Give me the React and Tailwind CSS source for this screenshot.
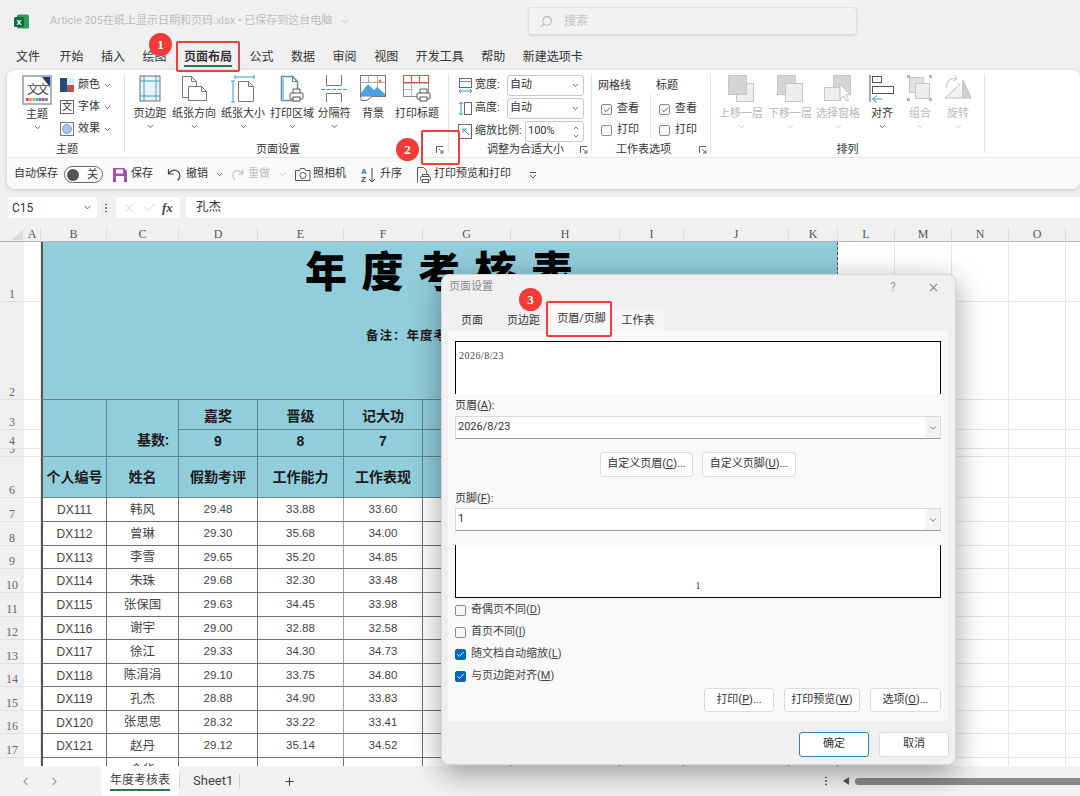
import React from 'react';
import { ChevronDown, ChevronUp, ChevronLeft, ChevronRight, Check, Plus, Search, X, EllipsisVertical } from 'lucide-react';

const cjk = "font-['Roboto','Noto_Sans_CJK_SC',sans-serif]";

const rows = [
  ['DX111', '韩风', '29.48', '33.88', '33.60'],
  ['DX112', '曾琳', '29.30', '35.68', '34.00'],
  ['DX113', '李雪', '29.65', '35.20', '34.85'],
  ['DX114', '朱珠', '29.68', '32.30', '33.48'],
  ['DX115', '张保国', '29.63', '34.45', '33.98'],
  ['DX116', '谢宇', '29.00', '32.88', '32.58'],
  ['DX117', '徐江', '29.33', '34.30', '34.73'],
  ['DX118', '陈涓涓', '29.10', '33.75', '34.80'],
  ['DX119', '孔杰', '28.88', '34.90', '33.83'],
  ['DX120', '张思思', '28.32', '33.22', '33.41'],
  ['DX121', '赵丹', '29.12', '35.14', '34.52'],
];
const letters = 'ABCDEFGHIJKLMNOP'.split('');

/* ---------- ribbon icons ---------- */
const Svg = ({ w = 30, h = 28, children }) => (
  <svg width={w} height={h} viewBox={`0 0 ${w} ${h}`} fill="none">{children}</svg>
);

const ThemeIcon = () => (
  <Svg w={30} h={30}>
    <rect x="1" y="1" width="28" height="28" fill="#fff" stroke="#8a9bb0" strokeWidth="1.5" />
    <path d="M20 2h8v10z" fill="#1f3864" />
    <text x="5" y="19" fontSize="12" fill="#444" fontFamily="Noto Sans CJK SC">文</text>
    <text x="15" y="19" fontSize="12" fill="#444" fontFamily="Noto Sans CJK SC">文</text>
    {['#c0504d', '#f79646', '#9bbb59', '#4bacc6', '#8064a2', '#c0504d', '#4f81bd'].map((c, i) => (
      <rect key={i} x={4 + i * 3.2} y="23" width="2.6" height="3" fill={c} />
    ))}
  </Svg>
);
const MarginIcon = () => (
  <Svg w={22} h={27}>
    <rect x="1" y="1" width="20" height="25" fill="#eaf5fb" stroke="#6e6e6e" />
    <path d="M5 1v25M17 1v25M1 6h20M1 21h20" stroke="#3c9ad6" />
  </Svg>
);
const Page = ({ d }) => <path d={d} fill="#fff" stroke="#777" />;
const OrientIcon = () => (
  <Svg w={27} h={27}>
    <Page d="M1.5 1.5h9l5 5v16h-14z" />
    <Page d="M7.5 11.5h13l5 5v9h-18z" />
    <path d="M10.5 1.5v5h5M20.5 11.5v5h5" stroke="#777" />
  </Svg>
);
const SizeIcon = () => (
  <Svg w={24} h={28}>
    <path d="M4 2h19M4 0v4M23 0v4M2 6v21M0 6h4M0 27h4" stroke="#3c9ad6" />
    <Page d="M7.5 6.5h10l5 5v15h-15z" />
    <path d="M17.5 6.5v5h5" stroke="#777" />
  </Svg>
);
const Printer = ({ x, y }) => (
  <g transform={`translate(${x} ${y})`}>
    <path d="M3.5 4.5v-4h7v4" fill="#fff" stroke="#555" />
    <rect x="0.5" y="4.5" width="13" height="6" rx="1" fill="#fff" stroke="#555" />
    <rect x="3.5" y="8.5" width="7" height="4" fill="#fff" stroke="#555" />
  </g>
);
const AreaIcon = () => (
  <Svg w={24} h={28}>
    <path d="M1.5 1.5h11l5 5v19h-16z" fill="#fff" stroke="#5f8fb5" strokeWidth="1.5" />
    <path d="M3 3v21" stroke="#9cc3df" strokeWidth="2" />
    <path d="M12.5 1.5v5h5" stroke="#777" />
    <Printer x={9.5} y={13.5} />
  </Svg>
);
const BreakIcon = () => (
  <Svg w={26} h={27}>
    <path d="M5.5 0v10.5h15V0M5.5 27V18.5h15V27" stroke="#777" />
    <path d="M0 14.5h26" stroke="#3c9ad6" strokeDasharray="4 1.5" />
  </Svg>
);
const PictureIcon = () => (
  <Svg w={26} h={27}>
    <rect x="0.5" y="0.5" width="25" height="21" fill="#fff" stroke="#777" />
    <path d="M.5 7.5h25M8.5.5v7M17.5.5v14" stroke="#aaa" />
    <path d="M1 18l7-9 6 6 3-3 8 7v2H1z" fill="#4aa3df" />
    <circle cx="20" cy="6" r="1.6" fill="#e8883a" />
    <path d="M1 21.5v4h6l5-4" fill="#fff" stroke="#777" />
  </Svg>
);
const TitlesIcon = () => (
  <Svg w={28} h={27}>
    <path d="M.5 8.5h25M.5 14.5h10M8.5.5v21M16.5.5v10" stroke="#b9b9b9" />
    <rect x="0.5" y="0.5" width="25" height="21" stroke="#8a8a8a" />
    <path d="M.5.5h25v7H.5zM8.5.5v7M16.5.5v7" stroke="#d9534f" strokeWidth="1.2" />
    <Printer x={13.5} y={13.5} />
  </Svg>
);
const UpIcon = () => (
  <Svg w={26} h={27}>
    <rect x="8.5" y="8.5" width="17" height="18" fill="#eee" stroke="#c6c6c6" />
    <rect x="0.5" y="0.5" width="18" height="19" fill="#d4d4d4" stroke="#c6c6c6" />
  </Svg>
);
const DownIcon = () => (
  <Svg w={26} h={27}>
    <rect x="0.5" y="0.5" width="18" height="19" fill="#d4d4d4" stroke="#c6c6c6" />
    <rect x="8.5" y="8.5" width="17" height="18" fill="#eee" stroke="#c6c6c6" />
  </Svg>
);
const PaneIcon = () => (
  <Svg w={28} h={27}>
    <rect x="9.5" y="0.5" width="17" height="19" fill="#d4d4d4" stroke="#c6c6c6" />
    <rect x="0.5" y="12.5" width="16" height="13" fill="#eee" stroke="#c6c6c6" />
    <path d="M16 9l10 10-4 1 2.500 5-2.500 1-2.500-5-3.500 3z" fill="#fff" stroke="#bcbcbc" />
  </Svg>
);
const AlignIcon = () => (
  <Svg w={26} h={28}>
    <path d="M1 0v27" stroke="#555" />
    <rect x="3.500" y="1.500" width="9" height="6" fill="#fff" stroke="#555" />
    <rect x="3.500" y="11.500" width="21" height="7" fill="#fff" stroke="#555" />
    <path d="M13 24H4M8 20.500L3.500 24 8 27.500" stroke="#3c9ad6" />
  </Svg>
);
const GroupIcon = () => (
  <Svg w={26} h={27}>
    <rect x="2.500" y="2.500" width="14" height="15" fill="#e2e2e2" stroke="#c6c6c6" />
    <rect x="8.500" y="8.500" width="14" height="15" fill="#eee" stroke="#c6c6c6" />
    {[[0, 0], [22, 0], [0, 23], [22, 23]].map(([x, y]) => <rect key={x + '-' + y} x={x} y={y} width="3" height="3" fill="#b5b5b5" />)}
  </Svg>
);
const RotateIcon = () => (
  <Svg w={28} h={27}>
    <path d="M19 5l8 18h-9z" fill="#cfcfcf" stroke="#c0c0c0" />
    <path d="M16 9L1 23h17" fill="#f2f2f2" stroke="#c0c0c0" />
    <path d="M3 13a7 7 0 0 1 9-9M11 0l2 4-4 2" stroke="#c0c0c0" />
  </Svg>
);
const Launcher = ({ className = '' }) => (
  <svg width="8" height="8" viewBox="0 0 8 8" fill="none" className={className}>
    <path d="M.5 7V.5H7M3 3l4 4M7 4v3H4" stroke="#666" />
  </svg>
);

/* ---------- small parts ---------- */
const Chev = ({ dim }) => <ChevronDown size={9} strokeWidth={2.2} className={dim ? 'text-[#c4c4c4]' : 'text-[#444]'} />;

function RibbonBtn({ width, label, icon, dim }) {
  return (
    <div className={`flex flex-col items-center ${width}`}>
      <div className="flex h-[29px] items-center justify-center">{icon}</div>
      <span className={`mt-[3px] h-[16px] whitespace-nowrap text-[11px] leading-[16px] ${dim ? 'text-[#b9b9b9]' : 'text-[#333]'}`}>{label}</span>
      <div className="flex h-[8px] items-center"><Chev dim={dim} /></div>
    </div>
  );
}

const Divider = () => <div className="mt-[4px] h-[79px] w-px shrink-0 bg-[#e4e4e4]" />;

function MiniRow({ icon, label }) {
  return (
    <div className="flex h-[22px] items-center">
      <div className="flex w-[18px] items-center">{icon}</div>
      <span className="text-[11px] text-[#333]">{label}</span>
      <span className="ml-[3px]"><Chev /></span>
    </div>
  );
}

function SizeRow({ icon, label, box, value, spin }) {
  return (
    <div className="flex h-[23px] items-center">
      <div className="flex w-[17px] items-center">{icon}</div>
      <span className="text-[11px] whitespace-nowrap text-[#333]">{label}</span>
      <div className={`ml-auto flex h-[21px] items-center justify-between rounded-[3px] border border-[#c8c8c8] bg-white pl-[2px] pr-[3px] text-[11px] text-[#333] ${box}`}>
        <span>{value}</span>
        {spin ? (
          <span className="flex flex-col"><ChevronUp size={8} /><ChevronDown size={8} /></span>
        ) : <Chev />}
      </div>
    </div>
  );
}

const RibbonCheck = ({ on, label }) => (
  <div className="flex h-[21px] items-center gap-[5px]">
    <span className="flex h-[11px] w-[11px] items-center justify-center rounded-[2px] border border-[#8a8a8a] bg-white">
      {on && <Check size={8} strokeWidth={2.5} className="text-[#333]" />}
    </span>
    <span className="text-[11px] text-[#333]">{label}</span>
  </div>
);

const DialogCheck = ({ on, children }) => (
  <div className="flex h-[22px] items-center gap-[5px]">
    <span className={`flex h-[11px] w-[11px] items-center justify-center rounded-[2px] border ${on ? 'border-[#0067c0] bg-[#0067c0]' : 'border-[#8a8a8a] bg-[#f6f6f6]'}`}>
      {on && <Check size={9} strokeWidth={2.5} className="text-white" />}
    </span>
    <span className="text-[11px] text-[#444]">{children}</span>
  </div>
);

const DlgBtn = ({ width, children, primary }) => (
  <div className={`flex items-center justify-center rounded-[3px] border bg-white text-[11px] text-[#333] ${width} ${primary ? 'border-[#2f7fc1]' : 'border-[#dcdcdc]'}`}>
    {children}
  </div>
);

const Combo = ({ value }) => (
  <div className="flex h-[23px] items-center border border-[#dadada] border-b-[#9a9a9a] bg-white pl-[2px] text-[11px] text-[#333]">
    <span className="flex-1">{value}</span>
    <span className="flex h-full w-[15px] items-center justify-center bg-[#f3f3f3]"><ChevronDown size={10} className="text-[#666]" /></span>
  </div>
);

const U = ({ children }) => <span className="underline">{children}</span>;

/* ---------- sheet cells ---------- */
const Blank = () => <div className="border-b border-r border-[#e7e7e7] bg-white" />;
const Blanks = () => <>{[0, 1, 2, 3, 4].map((i) => <Blank key={i} />)}</>;
const RowNum = ({ n }) => (
  <div className="flex items-end justify-center overflow-hidden border-b border-[#e0e0e0] bg-[#f0f0f0] font-['Liberation_Serif',serif] text-[12px] leading-[13px] text-[#666]">{n}</div>
);
const ColA = () => <div className="border-b border-r border-[#e7e7e7] bg-white" />;
const Blue = ({ className = '', children }) => (
  <div className={`flex items-center justify-center border-b border-r border-[#5f8494] bg-[#92cddc] pt-[1px] text-[14px] font-bold text-[#1b1b1b] ${className}`}>{children}</div>
);
const Data = ({ className = '', children }) => (
  <div className={`flex items-center justify-center overflow-hidden border-b border-r border-[#707070] bg-white pt-[1px] text-[#444] ${className}`}>{children}</div>
);
const num = "font-['Liberation_Sans',sans-serif] text-[11.5px]";

function Sheet() {
  return (
    <div className="min-h-0 flex-1 overflow-hidden bg-white">
      <div className="grid grid-cols-[24px_17px_66px_72px_79px_86px_79px_88px_109px_64px_105px_49px_57px_57px_57px_57px_57px] grid-rows-[15px_60px_98px_30px_19px_8px_41px_24px_24px_23px_24px_24px_23px_24px_23px_24px_23px_24px_24px]">
        <div className="flex items-center justify-end border-b border-[#b5b5b5] bg-[#f0f0f0] pr-[1px]">
          <svg width="11" height="11" viewBox="0 0 11 11"><path d="M11 0v11H0z" fill="#dcdcdc" /></svg>
        </div>
        {letters.map((l) => (
          <div key={l} className="flex items-center justify-center overflow-hidden border-b border-r border-b-[#b5b5b5] border-r-[#dedede] bg-[#f0f0f0] font-['Liberation_Serif',serif] text-[12px] text-[#555]">{l}</div>
        ))}

        <RowNum n={1} /><ColA />
        <div className="col-span-10 row-span-2 flex flex-col border-b border-l-2 border-r border-b-[#5f8494] border-l-[#555] border-r-[#555] bg-[#92cddc] [border-right-style:dashed]">
          <div className="flex h-[59px] items-start justify-center">
            <span className="whitespace-pre text-[42px] font-black leading-[62px] tracking-[2px] text-black">年 度 考 核 表</span>
          </div>
          <div className="mt-[26px] pl-[323px] text-[12.5px] font-bold tracking-[1px] text-[#1b1b1b]">备注：年度考</div>
        </div>
        <Blanks />
        <RowNum n={2} /><ColA /><Blanks />

        <RowNum n={3} /><ColA />
        <Blue className="row-span-3 border-l-2 border-l-[#555]" />
        <Blue className="row-span-3 items-end justify-end pb-[5px] pr-[9px]">基数:</Blue>
        <Blue className="pt-[3px]">嘉奖</Blue><Blue className="pt-[3px]">晋级</Blue><Blue className="pt-[3px]">记大功</Blue><Blue /><Blue /><Blue /><Blue /><Blue />
        <Blanks />
        <RowNum n={4} /><ColA />
        <Blue className={`row-span-2 pb-[4px] ${num} !text-[14px]`}>9</Blue>
        <Blue className={`row-span-2 pb-[4px] ${num} !text-[14px]`}>8</Blue>
        <Blue className={`row-span-2 pb-[4px] ${num} !text-[14px]`}>7</Blue>
        <Blue className="row-span-2" /><Blue className="row-span-2" /><Blue className="row-span-2" /><Blue className="row-span-2" /><Blue className="row-span-2" />
        <Blanks />
        <RowNum n={5} /><ColA /><Blanks />

        <RowNum n={6} /><ColA />
        <Blue className="whitespace-nowrap border-l-2 border-l-[#555]">个人编号</Blue>
        <Blue>姓名</Blue><Blue>假勤考评</Blue><Blue>工作能力</Blue><Blue>工作表现</Blue><Blue /><Blue /><Blue /><Blue /><Blue />
        <Blanks />

        {rows.map((r, i) => (
          <React.Fragment key={r[0]}>
            <RowNum n={i + 7} /><ColA />
            <Data className={`border-l-2 border-l-[#555] ${num} text-[12px]`}>{r[0]}</Data>
            <Data className="text-[12.5px]">{r[1]}</Data>
            <Data className={`${num}`}>{r[2]}</Data>
            <Data className={`${num} border-r-[#a5a5a5]`}>{r[3]}</Data>
            <Data className={`${num}`}>{r[4]}</Data>
            <Data /><Data /><Data /><Data /><Data />
            <Blanks />
          </React.Fragment>
        ))}
        <RowNum n={18} /><ColA />
        <Data className={`border-l-2 border-l-[#555] ${num}`} />
        <Data className="text-[12.5px]">金华</Data>
        <Data /><Data /><Data /><Data /><Data /><Data /><Data /><Data />
        <Blanks />
      </div>
    </div>
  );
}

/* ---------- dialog ---------- */
function PageSetupDialog() {
  return (
    <div className="absolute left-[441px] top-[274px] flex h-[491px] w-[515px] flex-col rounded-[8px] border border-[#d5d5d5] bg-[#f0f0f0] shadow-[0_8px_30px_rgba(0,0,0,0.38)]">
      <div className="flex h-[34px] shrink-0 items-center pb-[10px] pl-[7px] pr-[15px] text-[11px] text-[#8a8a8a]">
        <span className="flex-1">页面设置</span>
        <span className="mr-[31px] text-[12px] text-[#9a9a9a]">?</span>
        <X size={13} className="text-[#8a8a8a]" />
      </div>
      <div className="flex h-[22px] shrink-0 items-end pl-[6px] text-[11px] text-[#333]">
        <div className="flex h-full w-[48px] items-center justify-center pt-[3px]">页面</div>
        <div className="flex h-full w-[55px] items-center justify-center pt-[3px]">页边距</div>
        <div className="flex h-[26px] w-[61px] items-center justify-center bg-[#f9f9f9] pt-[3px]">页眉/页脚</div>
        <div className="flex h-full w-[52px] items-center justify-center rounded-t-[3px] bg-[#f6f6f6] pt-[3px]">工作表</div>
      </div>
      <div className="ml-[6px] flex h-[390px] w-[500px] shrink-0 flex-col bg-[#f9f9f9] px-[7px] pt-[10px]">
        <div className="h-[53px] border-x border-t border-black bg-white pl-[3px] pt-[8px] font-['Liberation_Serif',serif] text-[10px] leading-[11px] tracking-[0.5px] text-[#444]">2026/8/23</div>
        <div className="flex h-[22px] items-center pt-[3px] text-[11px] text-[#333]">页眉(<U>A</U>):</div>
        <Combo value="2026/8/23" />
        <div className="mt-[13px] flex h-[25px] justify-center gap-[9px]">
          <DlgBtn width="w-[93px]">自定义页眉(<U>C</U>)...</DlgBtn>
          <DlgBtn width="w-[94px]">自定义页脚(<U>U</U>)...</DlgBtn>
        </div>
        <div className="mt-[10px] flex h-[21px] items-center pt-[3px] text-[11px] text-[#333]">页脚(<U>F</U>):</div>
        <Combo value="1" />
        <div className="mt-[14px] flex h-[53px] items-end justify-center border-x border-b border-black bg-white pb-[4px] font-['Liberation_Serif',serif] text-[10px] text-[#333]">1</div>
        <div className="mt-[1px] flex flex-col">
          <DialogCheck>奇偶页不同(<U>D</U>)</DialogCheck>
          <DialogCheck>首页不同(<U>I</U>)</DialogCheck>
          <DialogCheck on>随文档自动缩放(<U>L</U>)</DialogCheck>
          <DialogCheck on>与页边距对齐(<U>M</U>)</DialogCheck>
        </div>
        <div className="mt-[1px] flex h-[24px] justify-end gap-[10px]">
          <DlgBtn width="w-[70px]">打印(<U>P</U>)...</DlgBtn>
          <DlgBtn width="w-[76px]">打印预览(<U>W</U>)</DlgBtn>
          <DlgBtn width="w-[71px]">选项(<U>O</U>)...</DlgBtn>
        </div>
      </div>
      <div className="mt-[11px] flex h-[25px] justify-end gap-[10px] pr-[6px]">
        <DlgBtn width="w-[70px]" primary>确定</DlgBtn>
        <DlgBtn width="w-[70px]">取消</DlgBtn>
      </div>
    </div>
  );
}

const Marker = ({ className, n }) => (
  <div className={`absolute flex h-[23px] w-[23px] items-center justify-center rounded-full bg-[#f23a36] font-['Liberation_Serif',serif] text-[13px] font-bold text-white ${className}`}>{n}</div>
);
const Frame = ({ className }) => (
  <div className={`pointer-events-none absolute rounded-[2px] border-2 border-[#ef3f3c] ${className}`} />
);

export default function App() {
  return (
    <div className={`relative flex h-[796px] w-[1080px] flex-col overflow-hidden bg-[#f0f0f0] ${cjk}`}>
      {/* Title bar */}
      <div className="flex h-[42px] shrink-0 items-center pl-[14px]">
        <svg width="15" height="15" viewBox="0 0 15 15">
          <rect x="3" y="0.500" width="12" height="14" rx="1.500" fill="#2e9e5b" />
          <rect x="0" y="3" width="10" height="10" rx="1.500" fill="#0f6b3a" />
          <text x="2.500" y="11" fontSize="9" fontWeight="700" fill="#fff" fontFamily="Liberation Sans">x</text>
        </svg>
        <span className="ml-[21px] w-[289px] whitespace-nowrap text-[11px] text-[#bdbdbd]">Article 205在纸上显示日期和页码.xlsx • 已保存到这台电脑</span>
        <ChevronDown size={11} className="text-[#bdbdbd]" />
        <div className="ml-[178px] flex h-[28px] w-[329px] items-center rounded-[4px] border border-[#e0e0e0] bg-[#f2f2f2] pl-[11px] shadow-[0_1px_2px_rgba(0,0,0,0.1)]">
          <Search size={13} className="-scale-x-100 text-[#b5b5b5]" />
          <span className="ml-[11px] text-[12px] text-[#c2c2c2]">搜索</span>
        </div>
      </div>

      {/* Ribbon tabs */}
      <div className="flex h-[28px] shrink-0 items-start gap-[17.5px] pl-[16px] text-[12px] text-[#333]">
        <span className="mr-[2px] h-[24px] leading-[30px]">文件</span>
        <span className="h-[24px] leading-[30px]">开始</span>
        <span className="h-[24px] leading-[30px]">插入</span>
        <span className="h-[24px] leading-[30px]">绘图</span>
        <span className="h-[25px] border-b-2 border-[#1f7244] font-bold leading-[30px]">页面布局</span>
        <span className="h-[24px] leading-[30px]">公式</span>
        <span className="h-[24px] leading-[30px]">数据</span>
        <span className="h-[24px] leading-[30px]">审阅</span>
        <span className="h-[24px] leading-[30px]">视图</span>
        <span className="h-[24px] leading-[30px]">开发工具</span>
        <span className="h-[24px] leading-[30px]">帮助</span>
        <span className="h-[24px] leading-[30px]">新建选项卡</span>
      </div>

      {/* Ribbon */}
      <div className="ml-[7px] shrink-0 rounded-b-[8px] rounded-t-[8px] bg-white shadow-[0_1px_4px_rgba(0,0,0,0.18)]">
        <div className="flex h-[88px] items-start border-b border-[#e8e8e8]">
          {/* 主题 */}
          <div className="flex h-[88px] w-[117px] flex-col pt-[4px]">
            <div className="flex h-[69px]">
              <div className="ml-[15px] flex w-[30px] flex-col items-center pt-[1px]">
                <ThemeIcon />
                <span className="mt-[2px] text-[11px] leading-[16px] text-[#333]">主题</span>
                <div className="flex h-[9px] items-center"><Chev /></div>
              </div>
              <div className="ml-[8px] flex flex-col">
                <MiniRow label="颜色" icon={
                  <svg width="14" height="14" viewBox="0 0 14 14">
                    <rect width="7" height="14" fill="#1f4e79" /><rect x="7" width="7" height="7" fill="#dce6f1" /><rect x="7" y="7" width="7" height="7" fill="#c0504d" />
                  </svg>} />
                <MiniRow label="字体" icon={
                  <span className="flex h-[14px] w-[14px] items-center justify-center border border-[#666] bg-white text-[10px] leading-none text-[#333]">文</span>} />
                <MiniRow label="效果" icon={
                  <svg width="14" height="14" viewBox="0 0 14 14">
                    <rect x="0.500" y="0.500" width="13" height="13" fill="#fff" stroke="#777" /><circle cx="7" cy="7" r="4.500" fill="#a9c6ea" stroke="#7d9cc5" />
                  </svg>} />
              </div>
            </div>
            <div className="flex h-[14px] items-center justify-center pl-[3px] text-[11px] text-[#333]">主题</div>
          </div>
          <Divider />

          {/* 页面设置 */}
          <div className="flex h-[88px] w-[323px] flex-col pt-[4px]">
            <div className="ml-[3px] flex h-[69px]">
              <RibbonBtn width="w-[44px]" label="页边距" icon={<MarginIcon />} />
              <RibbonBtn width="w-[44px]" label="纸张方向" icon={<OrientIcon />} />
              <RibbonBtn width="w-[54px]" label="纸张大小" icon={<SizeIcon />} />
              <RibbonBtn width="w-[44px]" label="打印区域" icon={<AreaIcon />} />
              <RibbonBtn width="w-[40px]" label="分隔符" icon={<BreakIcon />} />
              <div className="flex w-[38px] flex-col items-center">
                <div className="flex h-[29px] items-center"><PictureIcon /></div>
                <span className="mt-[3px] text-[11px] leading-[16px] text-[#333]">背景</span>
              </div>
              <div className="flex w-[50px] flex-col items-center">
                <div className="flex h-[29px] items-center"><TitlesIcon /></div>
                <span className="mt-[3px] whitespace-nowrap text-[11px] leading-[16px] text-[#333]">打印标题</span>
              </div>
            </div>
            <div className="flex h-[14px] items-center">
              <span className="flex-1 pr-[5px] text-center text-[11px] text-[#333]">页面设置</span>
              <Launcher className="mr-[4px]" />
            </div>
          </div>
          <Divider />

          {/* 调整为合适大小 */}
          <div className="flex h-[88px] w-[142px] flex-col pt-[4px]">
            <div className="flex h-[69px] flex-col pl-[9px] pr-[7px]">
              <SizeRow label="宽度:" box="w-[77px]" value="自动" icon={
                <svg width="15" height="15" viewBox="0 0 15 15" fill="none"><rect x="1.500" y="0.500" width="12" height="9" fill="#fff" stroke="#666" /><path d="M1.500 3.500h12M1 13h13M3 11l-2 2 2 2M12 11l2 2-2 2" stroke="#3c9ad6" /></svg>} />
              <SizeRow label="高度:" box="w-[77px]" value="自动" icon={
                <svg width="15" height="15" viewBox="0 0 15 15" fill="none"><rect x="6.500" y="1.500" width="7" height="12" fill="#fff" stroke="#666" /><path d="M3 1v13M1 3l2-2 2 2M1 12l2 2 2-2" stroke="#3c9ad6" /></svg>} />
              <SizeRow label="缩放比例:" box="w-[59px]" value="100%" spin icon={
                <svg width="14" height="15" viewBox="0 0 14 15" fill="none"><rect x="0.500" y="0.500" width="13" height="14" fill="#fff" stroke="#666" /><path d="M5 5l6 6M5 9V5h4" stroke="#3c9ad6" /></svg>} />
            </div>
            <div className="flex h-[14px] items-center">
              <span className="flex-1 whitespace-nowrap pl-[22px] text-center text-[11px] text-[#333]">调整为合适大小</span>
              <Launcher className="mr-[3px]" />
            </div>
          </div>
          <Divider />

          {/* 工作表选项 */}
          <div className="flex h-[88px] w-[118px] flex-col pt-[4px]">
            <div className="flex h-[69px] pl-[6px]">
              <div className="w-[52px]">
                <div className="flex h-[20px] items-end text-[11px] text-[#333]">网格线</div>
                <div className="pl-[3px] pt-[5px]"><RibbonCheck on label="查看" /><RibbonCheck label="打印" /></div>
              </div>
              <div className="mt-[20px] h-[44px] w-px bg-[#e4e4e4]" />
              <div className="pl-[5px]">
                <div className="flex h-[20px] items-end text-[11px] text-[#333]">标题</div>
                <div className="pl-[3px] pt-[5px]"><RibbonCheck on label="查看" /><RibbonCheck label="打印" /></div>
              </div>
            </div>
            <div className="flex h-[14px] items-center">
              <span className="flex-1 pr-[4px] text-center text-[11px] text-[#333]">工作表选项</span>
              <Launcher className="mr-[3px]" />
            </div>
          </div>
          <Divider />

          {/* 排列 */}
          <div className="flex h-[88px] w-[273px] flex-col pt-[4px]">
            <div className="ml-[2px] flex h-[69px]">
              <RibbonBtn dim width="w-[56px]" label="上移一层" icon={<UpIcon />} />
              <RibbonBtn dim width="w-[42px]" label="下移一层" icon={<DownIcon />} />
              <RibbonBtn dim width="w-[54px]" label="选择窗格" icon={<PaneIcon />} />
              <RibbonBtn width="w-[34px]" label="对齐" icon={<AlignIcon />} />
              <RibbonBtn dim width="w-[42px]" label="组合" icon={<GroupIcon />} />
              <RibbonBtn dim width="w-[34px]" label="旋转" icon={<RotateIcon />} />
            </div>
            <div className="flex h-[14px] items-center justify-center text-[11px] text-[#333]">排列</div>
          </div>
          <Divider />
        </div>

        {/* Quick access */}
        <div className="flex h-[31px] items-center rounded-b-[8px] bg-[#fafafa] pl-[7px] pt-[2px] text-[11px] text-[#333]">
          <span>自动保存</span>
          <div className="ml-[6px] flex h-[17px] w-[39px] items-center rounded-full border border-[#666] bg-white pl-[2px]">
            <span className="h-[12px] w-[12px] rounded-full bg-[#555]" />
            <span className="ml-[8px] text-[11px] leading-none">关</span>
          </div>
          <svg width="14" height="14" viewBox="0 0 14 14" className="ml-[10px]">
            <path d="M0 0h11l3 3v11H0z" fill="#a64fb3" /><rect x="3" y="1.500" width="7" height="4" fill="#fff" /><rect x="3" y="8" width="8" height="6" fill="#fff" />
          </svg>
          <span className="ml-[4px]">保存</span>
          <svg width="15" height="15" viewBox="0 0 15 15" fill="none" className="ml-[14px]">
            <path d="M1.500 2v5h5M1.500 7C4 3 8 2 11 4.500c3 2.500 2.500 6.500-.5 9" stroke="#444" strokeWidth="1.200" />
          </svg>
          <span className="ml-[4px]">撤销</span>
          <span className="ml-[7px]"><Chev /></span>
          <svg width="13" height="15" viewBox="0 0 15 15" fill="none" className="ml-[7px]">
            <path d="M13.500 2v5h-5M13.500 7C11 3 7 2 4 4.500c-3 2.500-2.500 6.500.5 9" stroke="#bcbcbc" strokeWidth="1.200" />
          </svg>
          <span className="ml-[4px] text-[#bcbcbc]">重做</span>
          <span className="ml-[8px]"><Chev dim /></span>
          <svg width="16" height="13" viewBox="0 0 16 13" fill="none" className="ml-[8px]">
            <path d="M.5 2.500h4l1-2h4l1 2h4.500v10H.5z" stroke="#555" /><circle cx="8" cy="7.500" r="3" stroke="#555" />
          </svg>
          <span className="ml-[2px]">照相机</span>
          <svg width="15" height="16" viewBox="0 0 15 16" fill="none" className="ml-[15px]">
            <text x="0" y="7" fontSize="8" fontWeight="700" fill="#2b79c2" fontFamily="Liberation Sans">A</text>
            <text x="0" y="15" fontSize="8" fontWeight="700" fill="#444" fontFamily="Liberation Sans">Z</text>
            <path d="M11 1v14M8 12l3 3 3-3" stroke="#444" />
          </svg>
          <span className="ml-[4px]">升序</span>
          <svg width="14" height="16" viewBox="0 0 14 16" fill="none" className="ml-[15px]">
            <path d="M.5 15.500V.5h6l3 3v3" stroke="#555" /><rect x="3.500" y="9.500" width="10" height="4" rx="1" fill="#fff" stroke="#555" /><rect x="5.500" y="12.500" width="6" height="3" fill="#fff" stroke="#555" /><path d="M5.500 9.500v-2h6v2" stroke="#555" />
          </svg>
          <span className="ml-[3px]">打印预览和打印</span>
          <svg width="8" height="8" viewBox="0 0 8 8" fill="none" className="ml-[18px]">
            <path d="M1 1.500h6M1 4l3 3 3-3" stroke="#555" />
          </svg>
        </div>
      </div>

      {/* Formula bar */}
      <div className="mb-[9px] ml-[8px] mt-[8px] flex h-[21px] shrink-0 items-center">
        <div className="flex h-full w-[89px] items-center justify-between rounded-[3px] bg-white pl-[4px] pr-[4px] text-[12px] text-[#333]">
          <span>C15</span><ChevronDown size={11} className="text-[#555]" />
        </div>
        <EllipsisVertical size={12} className="ml-[3px] text-[#555]" />
        <div className="ml-[4px] flex h-full w-[64px] items-center rounded-[3px] bg-white pl-[6px]">
          <X size={14} strokeWidth={1} className="text-[#bdbdbd]" />
          <Check size={15} strokeWidth={1} className="ml-[6px] text-[#bdbdbd]" />
          <span className="ml-[5px] font-['Liberation_Serif',serif] text-[13px] font-bold italic text-[#444]">fx</span>
        </div>
        <div className="ml-[6px] flex h-full flex-1 items-center rounded-l-[3px] bg-white pl-[10px] text-[12.5px] text-[#333]">孔杰</div>
      </div>

      <Sheet />

      {/* Sheet tabs */}
      <div className="flex h-[30px] shrink-0 items-center bg-[#f2f2f2] text-[#444]">
        <ChevronLeft size={13} className="ml-[19px] text-[#a0a0a0]" />
        <ChevronRight size={13} className="ml-[16px] text-[#a0a0a0]" />
        <div className="ml-[40px] flex h-full w-[78px] flex-col items-center justify-center rounded-b-[3px] bg-white text-[12px]">
          <span className="border-b-2 border-[#2b7a54] pb-[1px] leading-[16px]">年度考核表</span>
        </div>
        <div className="h-[14px] w-px bg-[#d0d0d0]" />
        <span className="ml-[13px] w-[46px] text-[13px]">Sheet1</span>
        <div className="h-[14px] w-px bg-[#d0d0d0]" />
        <Plus size={13} className="ml-[43px] text-[#444]" />
        <EllipsisVertical size={12} className="ml-[524px] text-[#555]" />
        <svg width="6" height="8" viewBox="0 0 6 8" className="ml-[11px]"><path d="M6 0v8L0 4z" fill="#555" /></svg>
        <div className="ml-[6px] h-[7px] flex-1 rounded-l-full bg-[#8a8a8a]" />
      </div>

      <PageSetupDialog />

      <Frame className="left-[176px] top-[41px] h-[31px] w-[64px]" />
      <Frame className="left-[421px] top-[130px] h-[35px] w-[39px]" />
      <Frame className="left-[546px] top-[301px] h-[36px] w-[66px]" />
      <Marker className="left-[149px] top-[33px]" n={1} />
      <Marker className="left-[396px] top-[138px]" n={2} />
      <Marker className="left-[519px] top-[288px]" n={3} />
    </div>
  );
}
